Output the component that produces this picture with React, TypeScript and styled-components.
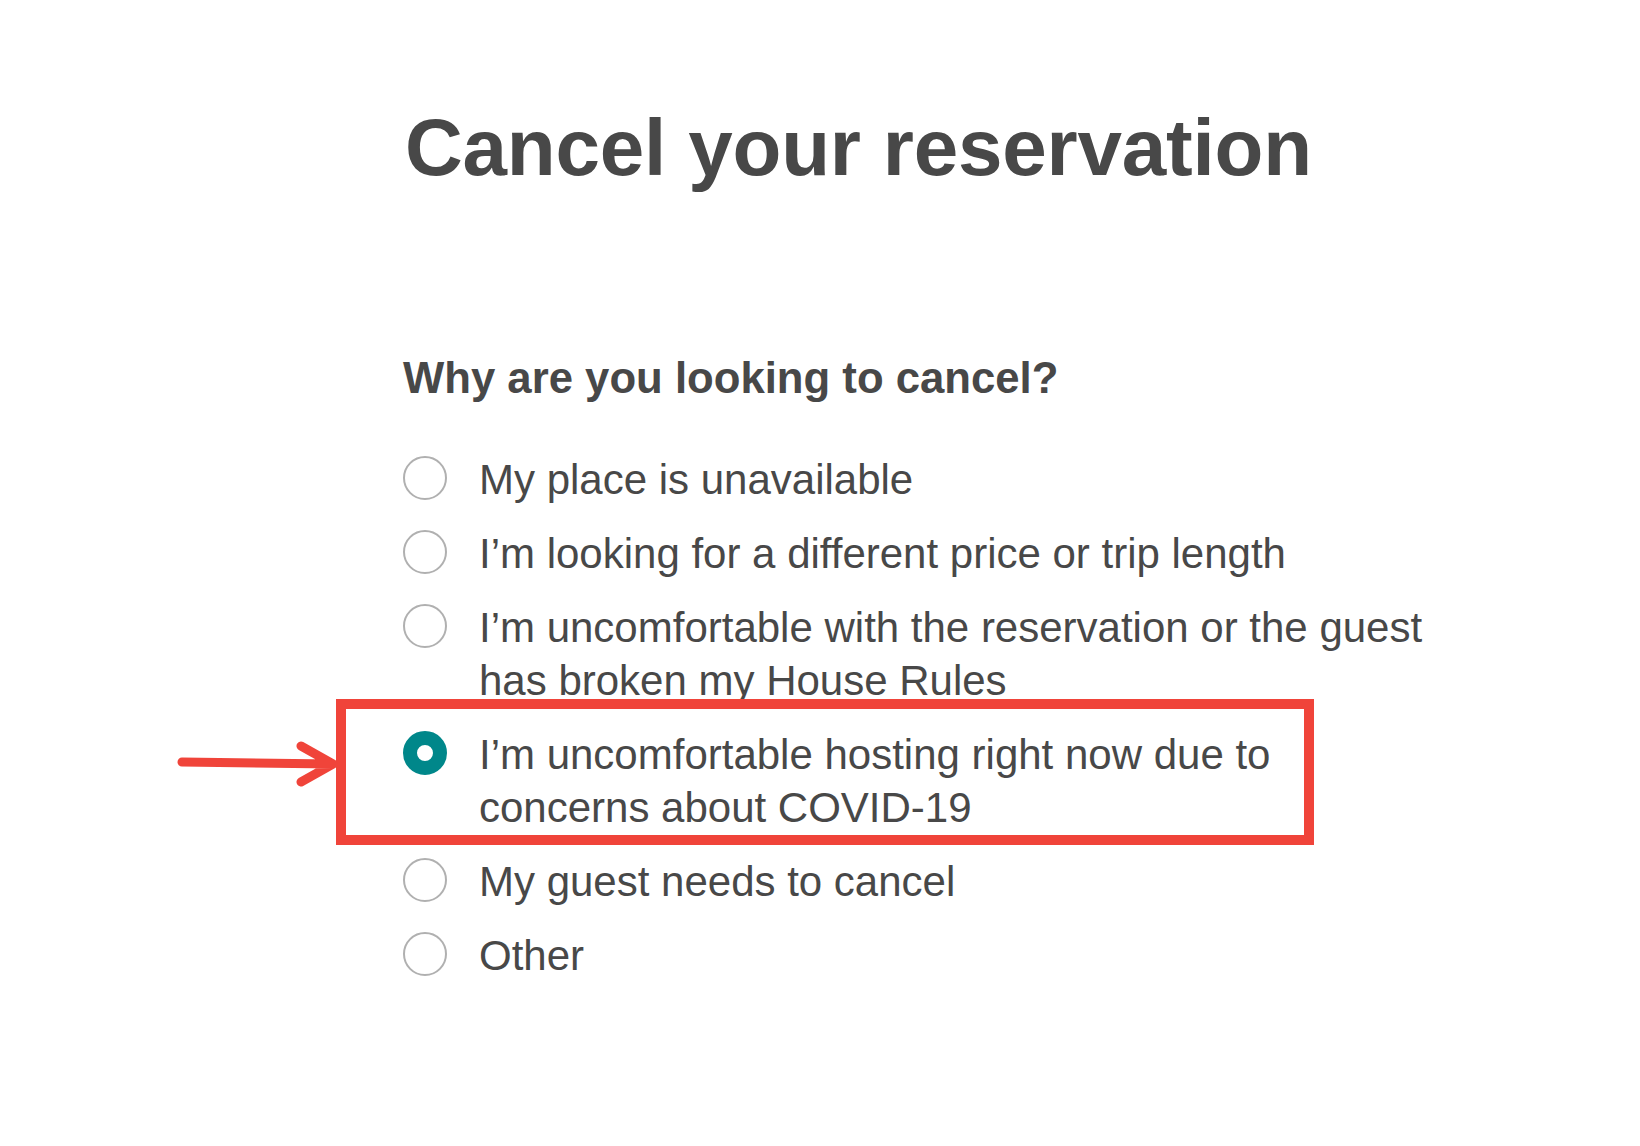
import styled, { createGlobalStyle } from 'styled-components';

const GlobalStyle = createGlobalStyle`
  html, body {
    margin: 0;
    padding: 0;
    background: #ffffff;
  }
  body {
    font-family: 'Liberation Sans', Arial, sans-serif;
    color: #484848;
  }
`;

const Page = styled.main`
  width: 1640px;
  min-height: 1146px;
  box-sizing: border-box;
  padding: 100px 0 0 405px;
`;

const Title = styled.h1`
  margin: 0;
  font-size: 80px;
  line-height: 1.2;
  font-weight: 700;
  letter-spacing: -0.2px;
  color: #484848;
`;

const Question = styled.h2`
  margin: 156px 0 0 -2px;
  font-size: 43.7px;
  line-height: 1.2;
  font-weight: 700;
  color: #484848;
`;

const Options = styled.ul`
  list-style: none;
  margin: 49px 0 0 -2px;
  padding: 0;
  display: flex;
  flex-direction: column;
  gap: 21px;
`;

const Option = styled.li`
  position: relative;
  display: flex;
  align-items: flex-start;
  gap: 32px;
`;

const Radio = styled.span<{ $checked?: boolean }>`
  flex: none;
  box-sizing: border-box;
  width: 44px;
  height: 44px;
  margin-top: 3px;
  border-radius: 50%;
  border: ${(p) => (p.$checked ? '14px solid #00878a' : '2px solid #b0b0b0')};
  background: #ffffff;
`;

const Label = styled.span`
  max-width: 962px;
  font-size: 42px;
  line-height: 53px;
  color: #484848;
`;

// annotation drawn over the chosen option
const Highlight = styled.div`
  position: absolute;
  left: -67px;
  top: -29px;
  width: 978px;
  height: 146px;
  box-sizing: border-box;
  border: 10px solid #f0443a;
  pointer-events: none;
`;

const Arrow = styled.svg`
  position: absolute;
  left: -230px;
  top: 8px;
  overflow: visible;
`;

const reasons = [
  { text: 'My place is unavailable' },
  { text: 'I’m looking for a different price or trip length' },
  { text: 'I’m uncomfortable with the reservation or the guest has broken my House Rules' },
  { text: 'I’m uncomfortable hosting right now due to concerns about COVID-19', checked: true },
  { text: 'My guest needs to cancel' },
  { text: 'Other' },
];

export default function App() {
  return (
    <>
      <GlobalStyle />
      <Page>
        <Title>Cancel your reservation</Title>
        <Question>Why are you looking to cancel?</Question>
        <Options>
          {reasons.map((r, i) => (
            <Option key={i}>
              <Radio $checked={r.checked} />
              <Label>{r.text}</Label>
              {r.checked && (
                <>
                  <Highlight />
                  <Arrow width="165" height="56" viewBox="0 0 165 56">
                    <path
                      d="M9 26 L160 28 M128 10 L160 28 L128 46"
                      fill="none"
                      stroke="#f0443a"
                      strokeWidth="9"
                      strokeLinecap="round"
                      strokeLinejoin="round"
                    />
                  </Arrow>
                </>
              )}
            </Option>
          ))}
        </Options>
      </Page>
    </>
  );
}
